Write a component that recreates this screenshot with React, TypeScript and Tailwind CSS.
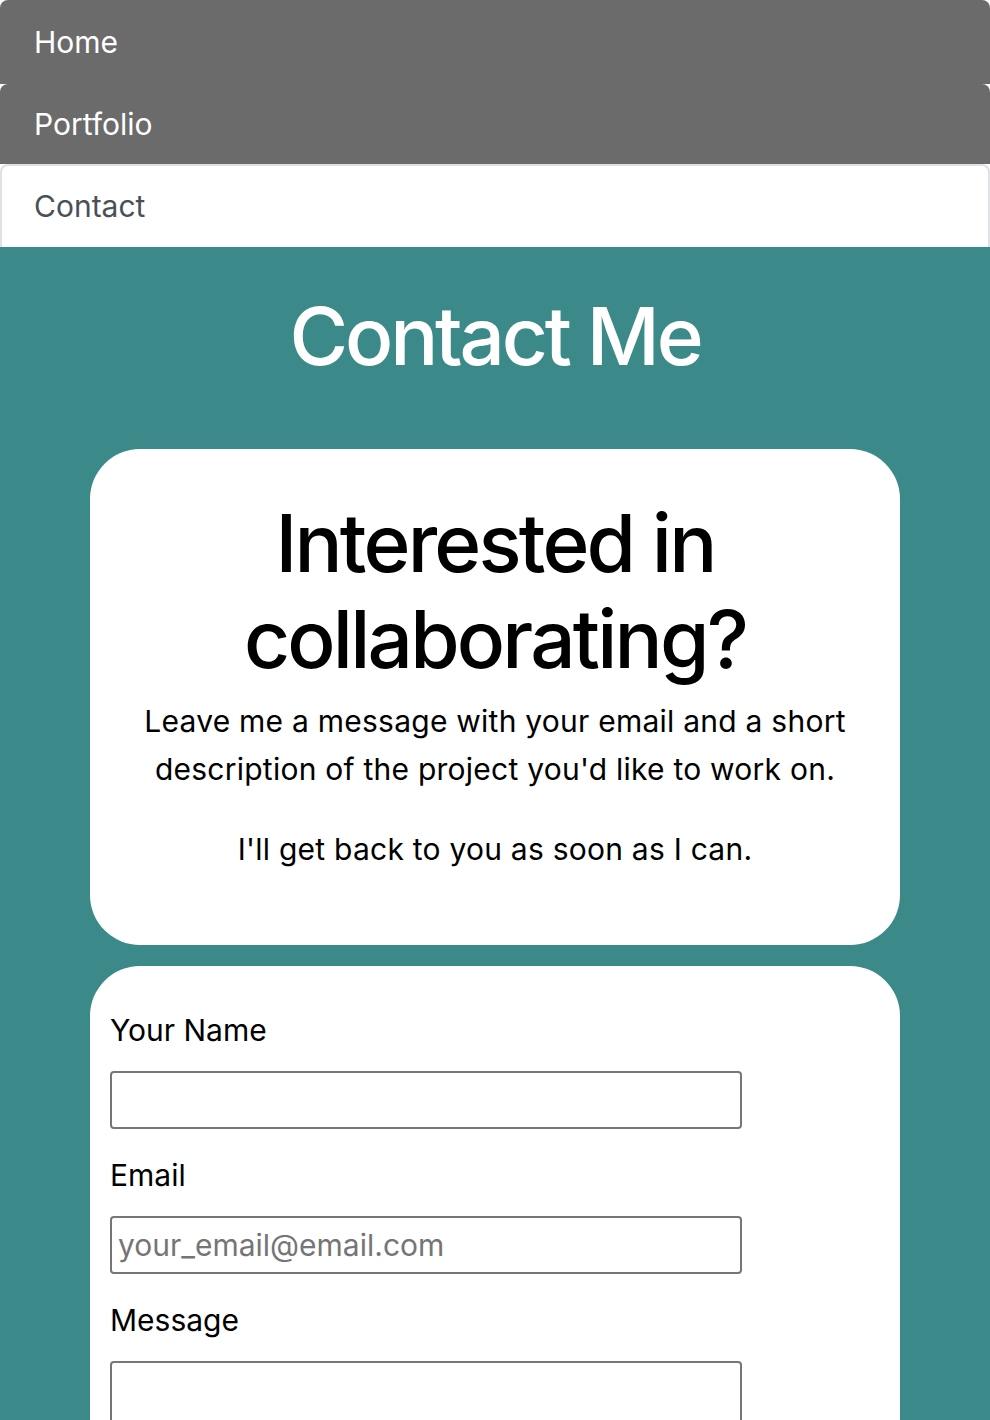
import React from 'react'

const tabs = [
  { label: 'Home', active: false, h: 'h-[84px]' },
  { label: 'Portfolio', active: false, h: 'h-[80px]' },
  { label: 'Contact', active: true, h: 'h-[83px]' },
]

function NavTabs() {
  return (
    <ul className="flex flex-col">
      {tabs.map((tab) =>
        tab.active ? (
          <li
            key={tab.label}
            className={`${tab.h} flex items-center rounded-t-[8px] border-2 border-b-0 border-[#dee2e6] bg-white px-8 text-[30px] text-[#495057]`}
          >
            {tab.label}
          </li>
        ) : (
          <li
            key={tab.label}
            className={`${tab.h} flex items-center rounded-t-[8px] bg-[#6b6b6b] px-[34px] text-[30px] text-white`}
          >
            {tab.label}
          </li>
        )
      )}
    </ul>
  )
}

function Field({
  label,
  placeholder,
  tall,
}: {
  label: string
  placeholder?: string
  tall?: boolean
}) {
  return (
    <div className="flex flex-col">
      <label className="text-[30px] leading-[48px] text-black">{label}</label>
      {tall ? (
        <textarea className="mt-[17px] h-[120px] w-[632px] resize-none rounded-[4px] border-2 border-[#767676] bg-white" />
      ) : (
        <input
          placeholder={placeholder}
          className="mt-[17px] h-[58px] w-[632px] rounded-[4px] border-2 border-[#767676] bg-white px-[6px] text-[30px] text-black placeholder:text-[#757575]"
        />
      )}
    </div>
  )
}

export default function App() {
  return (
    <div className="h-[1420px] overflow-hidden bg-white font-['Inter',sans-serif]">
      <NavTabs />
      <main className="flex flex-col items-center bg-[#3b8a89] pb-10">
        <h1 className="mt-[41px] text-[80px] font-medium leading-[96px] tracking-[-0.04em] text-white">
          Contact Me
        </h1>
        <section className="mt-[65px] w-[810px] rounded-[50px] bg-white px-10 pt-[46px] pb-[72px] text-center text-black">
          <h2 className="text-[80px] font-medium leading-[96px] tracking-[-0.035em]">
            Interested in
            <br />
            collaborating?
          </h2>
          <p className="mt-[10px] text-[30px] leading-[48px] tracking-[0.008em]">
            Leave me a message with your email and a short description of the
            project you'd like to work on.
          </p>
          <p className="mt-[32px] text-[30px] leading-[48px] tracking-[0.008em]">
            I'll get back to you as soon as I can.
          </p>
        </section>
        <form className="mt-[21px] flex w-[810px] flex-col gap-[22px] rounded-[50px] bg-white px-5 pt-[40px] pb-10">
          <Field label="Your Name" />
          <Field label="Email" placeholder="your_email@email.com" />
          <Field label="Message" tall />
        </form>
      </main>
    </div>
  )
}
